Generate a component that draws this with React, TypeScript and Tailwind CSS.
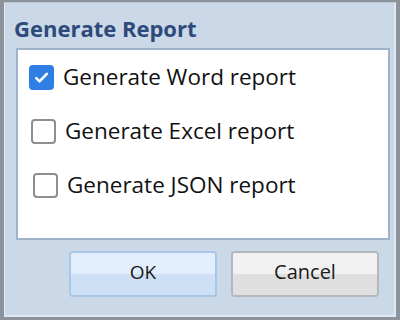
import React from "react";

const options = [
  { label: "Generate Word report", checked: true },
  { label: "Generate Excel report", checked: false },
  { label: "Generate JSON report", checked: false },
];

function CheckBox({ checked }: { checked: boolean }) {
  if (checked) {
    return (
      <span className="flex h-[25px] w-[25px] shrink-0 items-center justify-center rounded-[4px] bg-[#2f7ee3]">
        <svg viewBox="0 0 16 16" className="h-[17px] w-[17px]" fill="none">
          <path
            d="M3 8.5l3.2 3.2L13 4.5"
            stroke="#fff"
            strokeWidth={2.4}
            strokeLinecap="round"
            strokeLinejoin="round"
          />
        </svg>
      </span>
    );
  }
  return (
    <span className="h-[25px] w-[25px] shrink-0 rounded-[4px] border-2 border-[#8e8e8e] bg-white" />
  );
}

export default function App() {
  return (
    <div
      className="flex h-[320px] w-[400px] bg-[#8d939b]"
      style={{ fontFamily: '"Open Sans", "Noto Sans", sans-serif' }}
    >
      <div className="mx-[4px] mt-[2px] mb-[3px] flex flex-1 flex-col border-l border-t border-r-2 border-b-2 border-l-[#e4ecf5] border-t-[#b9c6d6] border-r-[#dfe8f3] border-b-[#dfe8f3] bg-[#cbd8e7]">
        <div className="pl-[9px] pt-[11px] text-[22px] font-bold leading-[28px] text-[#2d4a7b]">
          Generate Report
        </div>
        <div className="ml-[11px] mr-[4px] mt-[6px] flex h-[192px] flex-col border-2 border-[#9db3cc] bg-white pl-[11px]">
          {options.map((o, i) => (
            <div
              key={o.label}
              className="flex h-[54px] items-center gap-[9px]"
              style={{ paddingLeft: i * 2 }}
            >
              <CheckBox checked={o.checked} />
              <span className="text-[22.5px] leading-none text-[#111]">{o.label}</span>
            </div>
          ))}
        </div>
        <div className="mt-[11px] flex gap-[14px] pl-[64px]">
          <button className="flex h-[46px] w-[148px] flex-col overflow-hidden rounded-[4px] border-2 border-[#a9c6e6] text-[19px] text-[#1a1a1a] shadow-[inset_0_0_0_1px_#f4f9ff]">
            <span className="flex h-[21px] w-full items-end justify-center bg-[#e2eefb] leading-[30px]">
              <span className="translate-y-[13px]">OK</span>
            </span>
            <span className="h-full w-full bg-[#cde0f5]" />
          </button>
          <button className="flex h-[46px] w-[148px] flex-col overflow-hidden rounded-[4px] border-2 border-[#b4b8bd] text-[20px] text-[#1a1a1a] shadow-[inset_0_0_0_1px_#fbfbfb]">
            <span className="flex h-[21px] w-full items-end justify-center bg-[#f1f1f1] leading-[30px]">
              <span className="translate-y-[13px]">Cancel</span>
            </span>
            <span className="h-full w-full bg-[#dfdfdf]" />
          </button>
        </div>
      </div>
    </div>
  );
}
